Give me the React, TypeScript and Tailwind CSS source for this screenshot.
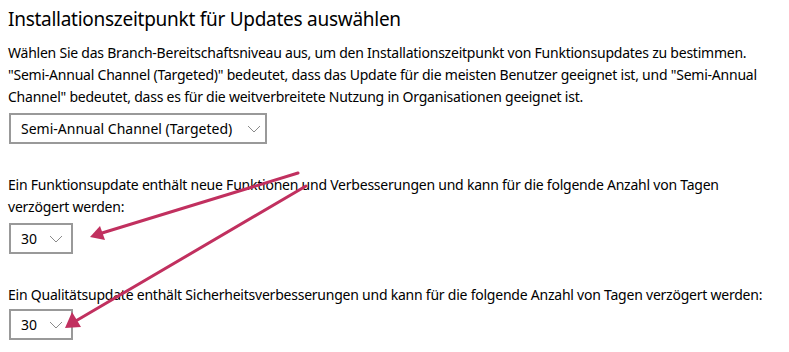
import React from "react";

function Chevron() {
  return (
    <svg width="14" height="8" viewBox="0 0 14 8" className="shrink-0">
      <path d="M1 1 L7 7 L13 1" fill="none" stroke="#8a8a8a" strokeWidth="1" />
    </svg>
  );
}

function Select({ value, wide }: { value: string; wide?: boolean }) {
  return (
    <div
      className={`flex items-center h-[31px] border-2 border-[#999999] bg-white pl-[10px] ${
        wide ? "w-[258px] pr-[4px] justify-between" : "w-[64px] pr-[8px] justify-between"
      }`}
    >
      <span className="text-[14px] tracking-[0px] text-black leading-none whitespace-nowrap">{value}</span>
      <Chevron />
    </div>
  );
}

export default function App() {
  return (
    <div
      className="relative w-[789px] h-[352px] bg-white overflow-hidden text-black"
      style={{ fontFamily: '"Noto Sans", "Open Sans", sans-serif' }}
    >
      <div className="pl-[8px] pt-[6px] flex flex-col">
        <h1 className="text-[19px] leading-[26px] font-normal tracking-[-0.27px] whitespace-nowrap">
          Installationszeitpunkt für Updates auswählen
        </h1>
        <p className="mt-[10px] text-[14px] leading-[22px] tracking-[-0.23px] whitespace-nowrap">
          Wählen Sie das Branch-Bereitschaftsniveau aus, um den Installationszeitpunkt von Funktionsupdates zu bestimmen.
          <br />
          "Semi-Annual Channel (Targeted)" bedeutet, dass das Update für die meisten Benutzer geeignet ist, und "Semi-Annual
          <br />
          Channel" bedeutet, dass es für die weitverbreitete Nutzung in Organisationen geeignet ist.
        </p>
        <div className="mt-[5px] pl-[1px]">
          <Select value="Semi-Annual Channel (Targeted)" wide />
        </div>
        <p className="mt-[30px] text-[14px] leading-[22px] tracking-[-0.23px] whitespace-nowrap">
          Ein Funktionsupdate enthält neue Funktionen und Verbesserungen und kann für die folgende Anzahl von Tagen
          <br />
          verzögert werden:
        </p>
        <div className="mt-[5px] pl-[1px]">
          <Select value="30" />
        </div>
        <p className="mt-[30px] text-[14px] leading-[22px] tracking-[-0.23px] whitespace-nowrap">
          Ein Qualitätsupdate enthält Sicherheitsverbesserungen und kann für die folgende Anzahl von Tagen verzögert werden:
        </p>
        <div className="mt-[3px] pl-[1px]">
          <Select value="30" />
        </div>
      </div>
      <svg className="absolute inset-0 pointer-events-none" width="789" height="352" viewBox="0 0 789 352">
        <line x1="298" y1="173" x2="102" y2="233" stroke="#c1305f" strokeWidth="3" strokeLinecap="round" />
        <polygon points="90,237 100,226 105,240" fill="#c1305f" />
        <line x1="306" y1="186" x2="74" y2="322" stroke="#c1305f" strokeWidth="3" strokeLinecap="round" />
        <polygon points="65,328 72,312 81,327" fill="#c1305f" />
      </svg>
    </div>
  );
}
